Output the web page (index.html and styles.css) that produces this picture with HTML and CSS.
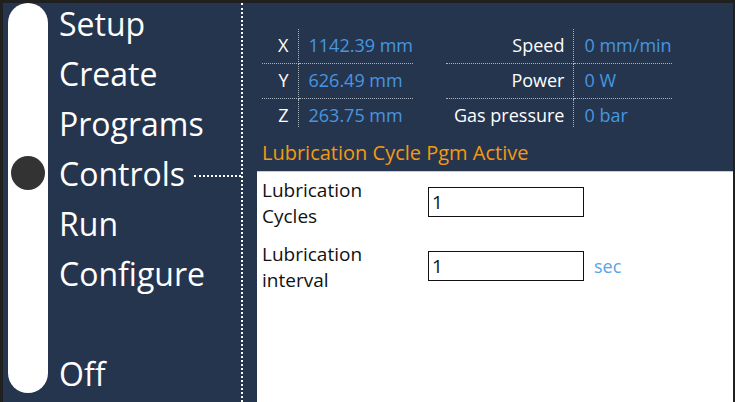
FILE: index.html
```html
<!DOCTYPE html>
<html lang="en">
<head>
<meta charset="utf-8">
<title>Controls</title>
<link rel="stylesheet" href="styles.css">
</head>
<body>
<div class="app">
  <nav class="nav">
    <div class="track"><div class="knob"></div></div>
    <ul class="menu">
      <li class="item">Setup</li>
      <li class="item">Create</li>
      <li class="item">Programs</li>
      <li class="item active"><span>Controls</span><span class="leader"></span></li>
      <li class="item">Run</li>
      <li class="item">Configure</li>
      <li class="item spacer"></li>
      <li class="item">Off</li>
    </ul>
  </nav>
  <main class="main">
    <div class="stats">
      <table class="stat-table axes">
        <tr><th>X</th><td>1142.39 mm</td></tr>
        <tr><th>Y</th><td>626.49 mm</td></tr>
        <tr><th>Z</th><td>263.75 mm</td></tr>
      </table>
      <table class="stat-table machine">
        <tr><th>Speed</th><td>0 mm/min</td></tr>
        <tr><th>Power</th><td>0 W</td></tr>
        <tr><th>Gas pressure</th><td>0 bar</td></tr>
      </table>
    </div>
    <h2 class="title">Lubrication Cycle Pgm Active</h2>
    <section class="panel">
      <div class="form-row">
        <label class="form-label" for="cycles">Lubrication<br>Cycles</label>
        <input class="form-input" id="cycles" type="text" value="1">
      </div>
      <div class="form-row">
        <label class="form-label" for="interval">Lubrication<br>interval</label>
        <input class="form-input" id="interval" type="text" value="1">
        <span class="unit">sec</span>
      </div>
    </section>
  </main>
</div>
</body>
</html>
```
FILE: styles.css
```css
* { box-sizing: border-box; }
html, body { margin: 0; padding: 0; }
body {
  background: #1f1f1f;
  font-family: "Open Sans", "Noto Sans", sans-serif;
  width: 735px;
  height: 402px;
  overflow: hidden;
}
.app {
  display: flex;
  height: 402px;
  border-top: 3px solid #202020;
  border-left: 3px solid #202020;
  border-right: 2px solid #202020;
  background: #26354e;
}
.nav {
  width: 240px;
  flex: none;
  display: flex;
  border-right: 2px dotted #ffffff;
}
.track {
  width: 40px;
  height: 390px;
  margin-left: 5px;
  background: #ffffff;
  border-radius: 20px;
  display: flex;
  flex-direction: column;
}
.knob {
  width: 34px;
  height: 34px;
  margin-top: 153px;
  margin-left: 3px;
  border-radius: 50%;
  background: #333333;
}
.menu {
  list-style: none;
  margin: -4px 0 0 11px;
  padding: 0;
  flex: 1;
}
.item {
  color: #ffffff;
  font-size: 32px;
  line-height: 50px;
  height: 50px;
  white-space: nowrap;
}
.item.active {
  display: flex;
  align-items: center;
}
.leader {
  flex: 1;
  margin-left: 9px;
  margin-top: 4px;
  border-top: 2px dotted #ffffff;
}
.main {
  flex: 1;
  display: flex;
  flex-direction: column;
  min-width: 0;
}
.stats {
  display: flex;
  padding: 26px 0 0 19px;
  gap: 33px;
}
.stat-table {
  border-collapse: collapse;
  font-size: 18px;
  line-height: 23px;
}
.stat-table th, .stat-table td {
  padding: 5px 0 6px;
  vertical-align: top;
  white-space: nowrap;
}
.stat-table tr:not(:last-child) th,
.stat-table tr:not(:last-child) td {
  border-bottom: 1px dotted #aab3c0;
}
.stat-table tr:last-child th,
.stat-table tr:last-child td {
  padding-bottom: 0;
}
.stat-table th {
  color: #ffffff;
  font-weight: 400;
  text-align: right;
  padding-right: 9px;
  border-right: 1px dotted #aab3c0;
}
.stat-table td {
  color: #4696e0;
  padding-left: 10px;
}
.axes th { width: 36px; }
.axes td { width: 112px; }
.machine th { width: 128px; }
.machine td { width: 98px; }
.title {
  margin: 13px 0 0 19px;
  font-size: 20px;
  line-height: 25px;
  font-weight: 400;
  color: #f39a12;
}
.panel {
  flex: 1;
  margin: 6px 0 0 14px;
  background: #ffffff;
  border-top: 1px solid #c8ccd2;
  padding: 5px 0 0 5px;
  display: flex;
  flex-direction: column;
  gap: 12px;
}
.form-row {
  display: flex;
  align-items: center;
}
.form-label {
  width: 166px;
  flex: none;
  font-size: 19px;
  line-height: 26px;
  color: #111111;
}
.form-input {
  width: 156px;
  height: 30px;
  margin-bottom: 3px;
  border: 1px solid #111111;
  padding: 0 3px;
  font-family: inherit;
  font-size: 19px;
  color: #111111;
  background: #ffffff;
  outline: none;
}
.unit {
  margin-left: 10px;
  margin-bottom: 3px;
  font-size: 18px;
  color: #5aa4e6;
}
```
